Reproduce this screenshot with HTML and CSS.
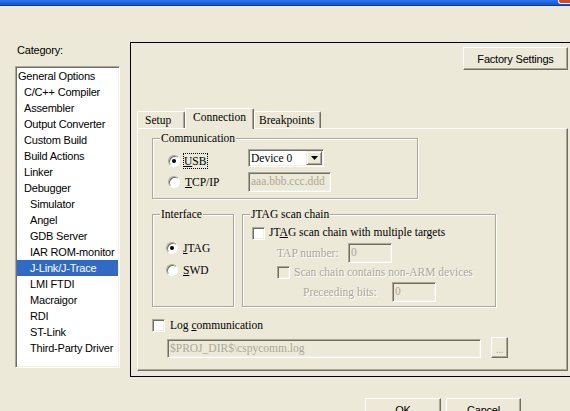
FILE: index.html
```html
<!DOCTYPE html>
<html>
<head>
<meta charset="utf-8">
<link rel="stylesheet" href="styles.css">
</head>
<body>
<div class="titlebar"><span class="close"></span></div>
<div class="main">
  <div class="left">
    <div class="cat-label">Category:</div>
    <ul class="list">
      <li class="l0">General Options</li>
      <li class="l1">C/C++ Compiler</li>
      <li class="l1">Assembler</li>
      <li class="l1">Output Converter</li>
      <li class="l1">Custom Build</li>
      <li class="l1">Build Actions</li>
      <li class="l1">Linker</li>
      <li class="l1">Debugger</li>
      <li class="l2">Simulator</li>
      <li class="l2">Angel</li>
      <li class="l2">GDB Server</li>
      <li class="l2">IAR ROM-monitor</li>
      <li class="l2 sel">J-Link/J-Trace</li>
      <li class="l2">LMI FTDI</li>
      <li class="l2">Macraigor</li>
      <li class="l2">RDI</li>
      <li class="l2">ST-Link</li>
      <li class="l2">Third-Party Driver</li>
    </ul>
  </div>
  <div class="right">
    <div class="frame">
      <div class="frame-top"><button class="btn factory">Factory Settings</button></div>
      <div class="tabs">
        <div class="tab setup">Setup</div>
        <div class="tab conn">Connection</div>
        <div class="tab bp">Breakpoints</div>
      </div>
      <div class="tabpanel">
        <fieldset class="group comm">
          <legend>Communication</legend>
          <div class="comm-grid">
            <div class="opt usb"><span class="radio on"></span><span class="focus"><u>U</u>SB</span></div>
            <div class="combo"><span class="combo-text">Device 0</span><span class="combo-btn"><svg width="7" height="4" viewBox="0 0 7 4"><polygon points="0,0 7,0 3.5,4" fill="#000"/></svg></span></div>
            <div class="opt"><span class="radio"></span><span class="lbl"><u>T</u>CP/IP</span></div>
            <div class="field ip">aaa.bbb.ccc.ddd</div>
          </div>
        </fieldset>
        <div class="group-row">
          <fieldset class="group iface">
            <legend>Interface</legend>
            <div class="iface-opts">
              <div class="opt"><span class="radio on"></span><span class="lbl"><u>J</u>TAG</span></div>
              <div class="opt"><span class="radio"></span><span class="lbl"><u>S</u>WD</span></div>
            </div>
          </fieldset>
          <fieldset class="group jtag">
            <legend>JTAG scan chain</legend>
            <div class="jtag-body">
              <div class="row-a"><span class="check"></span><span class="clbl">JT<u>A</u>G scan chain with multiple targets</span></div>
              <div class="row-b"><span class="dis tap-lbl">TAP number:</span><span class="field small">0</span></div>
              <div class="row-c"><span class="check off"></span><span class="dis clbl">Scan chain contains non-ARM devices</span></div>
              <div class="row-d"><span class="dis pre-lbl">Preceeding bits:</span><span class="field small">0</span></div>
            </div>
          </fieldset>
        </div>
        <div class="log-row"><span class="check"></span><span class="log-lbl">Log <u>c</u>ommunication</span></div>
        <div class="path-row"><span class="field path">$PROJ_DIR$\cspycomm.log</span><button class="btn browse">...</button></div>
      </div>
    </div>
    <div class="dlg-buttons"><button class="btn ok">OK</button><button class="btn cancel">Cancel</button></div>
  </div>
</div>
</body>
</html>
```
FILE: styles.css
```css
html, body {
  margin: 0;
  padding: 0;
  width: 570px;
  height: 411px;
  overflow: hidden;
  background: #ECE9D8;
}
body {
  font-family: "Liberation Sans", Arial, sans-serif;
  font-size: 11px;
  letter-spacing: -0.2px;
  color: #000;
}

/* title bar strip */
.titlebar {
  height: 5px;
  background: linear-gradient(#2F74EA, #0A55DE);
  border-bottom: 1px solid #0B3AAA;
  display: flex;
  justify-content: flex-end;
}
.close {
  width: 11px;
  height: 3px;
  background: #D9491F;
  border-left: 1px solid #E6ECF8;
  border-bottom: 1px solid #E6ECF8;
  border-bottom-left-radius: 3px;
}

.main {
  display: flex;
  align-items: flex-start;
}

/* left: category list */
.left {
  flex: none;
  width: 105px;
  margin-left: 15px;
  padding-top: 38px;
}
.cat-label {
  line-height: 13px;
  padding-left: 2px;
}
.list {
  list-style: none;
  margin: 9px 0 0;
  padding: 1px;
  box-sizing: border-box;
  width: 105px;
  height: 302px;
  background: #fff;
  border: 1px solid;
  border-color: #ACA899 #fff #fff #ACA899;
  box-shadow: inset 1px 1px 0 #716F64, inset -1px -1px 0 #F1EFE2;
}
.list li {
  height: 16px;
  line-height: 16px;
  white-space: nowrap;
}
.l0 { padding-left: 1px; }
.l1 { padding-left: 7px; }
.l2 { padding-left: 13px; }
.sel {
  background: #316AC5;
  color: #fff;
}

/* right side */
.right {
  flex: none;
  width: 445px;
  margin-left: 10px;
  padding-top: 36px;
}
.frame {
  box-sizing: border-box;
  height: 335px;
  border: 1px solid #000;
}
.frame-top {
  display: flex;
  padding: 4px 0 0 332px;
}
.btn {
  box-sizing: border-box;
  font: 11px "Liberation Sans", Arial, sans-serif;
  letter-spacing: -0.2px;
  color: #000;
  background: #ECE9D8;
  border: 1px solid;
  border-color: #fff #716F64 #716F64 #fff;
  box-shadow: inset -1px -1px 0 #ACA899;
  padding: 0;
  margin: 0;
  display: flex;
  align-items: center;
  justify-content: center;
}
.factory {
  width: 105px;
  height: 23px;
}

/* tabs */
.tabs {
  display: flex;
  align-items: flex-end;
  height: 20px;
  margin: 38px 0 0 6px;
  position: relative;
  z-index: 1;
}
.tab {
  box-sizing: border-box;
  height: 17px;
  font: 11.5px "Liberation Serif", "Times New Roman", serif;
  letter-spacing: 0;
  line-height: 15px;
  padding-top: 1px;
  white-space: nowrap;
  background: #ECE9D8;
  border-top: 1px solid #fff;
  border-left: 1px solid #fff;
  border-right: 1px solid #716F64;
  border-top-left-radius: 2px;
  border-top-right-radius: 2px;
  box-shadow: inset -1px 0 0 #ACA899;
}
.setup { width: 48px; padding-left: 7px; }
.conn { width: 69px; height: 21px; margin-bottom: -1px; padding-left: 7px; }
.bp { width: 67px; padding-left: 4px; }

.tabpanel {
  box-sizing: border-box;
  width: 431px;
  height: 243px;
  margin-left: 6px;
  border: 1px solid;
  border-color: #fff #716F64 #716F64 #fff;
  box-shadow: inset -1px -1px 0 #ACA899;
  font: 11.5px "Liberation Serif", "Times New Roman", serif;
  letter-spacing: 0;
}

/* group boxes */
.group {
  margin: 0;
  padding: 0;
  min-width: 0;
  box-sizing: border-box;
  border: 1px solid #ACA899;
  box-shadow: inset 1px 1px 0 #fff, 1px 1px 0 #fff;
}
.group legend {
  margin-left: 7px;
  padding: 0 1px;
  line-height: 14px;
  background: #ECE9D8;
}
.comm {
  width: 266px;
  margin: 2px 0 0 14px;
}
.comm-grid {
  display: grid;
  grid-template-columns: 80px auto;
  row-gap: 5px;
  justify-items: start;
  align-items: center;
  padding: 4px 0 6px 15px;
}

.opt {
  display: flex;
  align-items: center;
}
.lbl {
  margin-left: 5px;
  line-height: 14px;
}
.usb {
  margin-top: 3px;
  margin-bottom: -3px;
}
.focus {
  margin-left: 3px;
  border: 1px dotted #000;
  padding: 0 1px 0 0;
  line-height: 14px;
}

.radio {
  flex: none;
  position: relative;
  box-sizing: border-box;
  width: 12px;
  height: 12px;
  border-radius: 50%;
  background: #fff;
  border: 1px solid;
  border-color: #ACA899 #fff #fff #ACA899;
  box-shadow: inset 1px 1px 0 #716F64;
}
.radio.on::after {
  content: "";
  position: absolute;
  left: 3px;
  top: 3px;
  width: 4px;
  height: 4px;
  border-radius: 50%;
  background: #000;
}

.check {
  flex: none;
  box-sizing: border-box;
  width: 13px;
  height: 13px;
  background: #fff;
  border: 1px solid;
  border-color: #ACA899 #fff #fff #ACA899;
  box-shadow: inset 1px 1px 0 #716F64, inset -1px -1px 0 #F1EFE2;
}
.check.off {
  background: #ECE9D8;
}

.combo {
  box-sizing: border-box;
  width: 76px;
  height: 18px;
  padding: 1px;
  display: flex;
  background: #fff;
  border: 1px solid;
  border-color: #ACA899 #fff #fff #ACA899;
  box-shadow: inset 1px 1px 0 #716F64, inset -1px -1px 0 #F1EFE2;
}
.combo-text {
  flex: 1;
  padding-left: 1px;
  line-height: 14px;
}
.combo-btn {
  box-sizing: border-box;
  width: 16px;
  height: 14px;
  display: flex;
  align-items: center;
  justify-content: center;
  background: #ECE9D8;
  border: 1px solid;
  border-color: #F1EFE2 #716F64 #716F64 #F1EFE2;
  box-shadow: inset 1px 1px 0 #fff, inset -1px -1px 0 #ACA899;
}

.field {
  box-sizing: border-box;
  display: block;
  background: #ECE9D8;
  color: #ACA899;
  padding-left: 2px;
  white-space: nowrap;
  border: 1px solid;
  border-color: #ACA899 #fff #fff #ACA899;
  box-shadow: inset 1px 1px 0 #716F64, inset -1px -1px 0 #F1EFE2;
}
.ip {
  width: 83px;
  height: 20px;
  line-height: 17px;
}
.small {
  width: 44px;
  height: 20px;
  line-height: 17px;
}
.path {
  width: 314px;
  height: 19px;
  line-height: 16px;
}

.group-row {
  display: flex;
  gap: 8px;
  margin: 8px 0 0 14px;
}
.iface {
  width: 82px;
}
.iface-opts {
  display: flex;
  flex-direction: column;
  gap: 6px;
  padding: 19px 0 0 13px;
}
.iface .opt {
  height: 16px;
}

.jtag {
  width: 254px;
}
.jtag-body {
  display: flex;
  flex-direction: column;
  padding: 5px 0 4px;
}
.row-a {
  display: flex;
  align-items: flex-start;
  height: 15px;
  padding-left: 9px;
}
.row-a .check {
  margin-top: 1px;
}
.clbl {
  margin-left: 4px;
  line-height: 13px;
  white-space: nowrap;
}
.row-b {
  display: flex;
  align-items: center;
  margin-top: 2px;
  padding-left: 34px;
}
.row-c {
  display: flex;
  align-items: center;
  height: 14px;
  margin-top: 2px;
  padding-left: 34px;
}
.row-d {
  display: flex;
  align-items: center;
  margin-top: 3px;
  padding-left: 60px;
}
.tap-lbl { width: 71px; }
.pre-lbl { width: 89px; }
.dis {
  color: #ACA899;
  text-shadow: 1px 1px 0 #fff;
  white-space: nowrap;
}

.log-row {
  display: flex;
  align-items: center;
  height: 13px;
  margin-top: 12px;
  padding-left: 14px;
}
.log-lbl {
  margin-left: 5px;
  line-height: 13px;
}
.path-row {
  display: flex;
  align-items: flex-end;
  margin-top: 5px;
  padding-left: 29px;
}
.browse {
  width: 17px;
  height: 21px;
  margin-left: 10px;
  color: #ACA899;
  font-size: 10px;
  padding-top: 3px;
}

.dlg-buttons {
  display: flex;
  gap: 5px;
  margin: 21px 0 0 235px;
}
.ok { width: 76px; height: 23px; }
.cancel { width: 75px; height: 23px; }
```
